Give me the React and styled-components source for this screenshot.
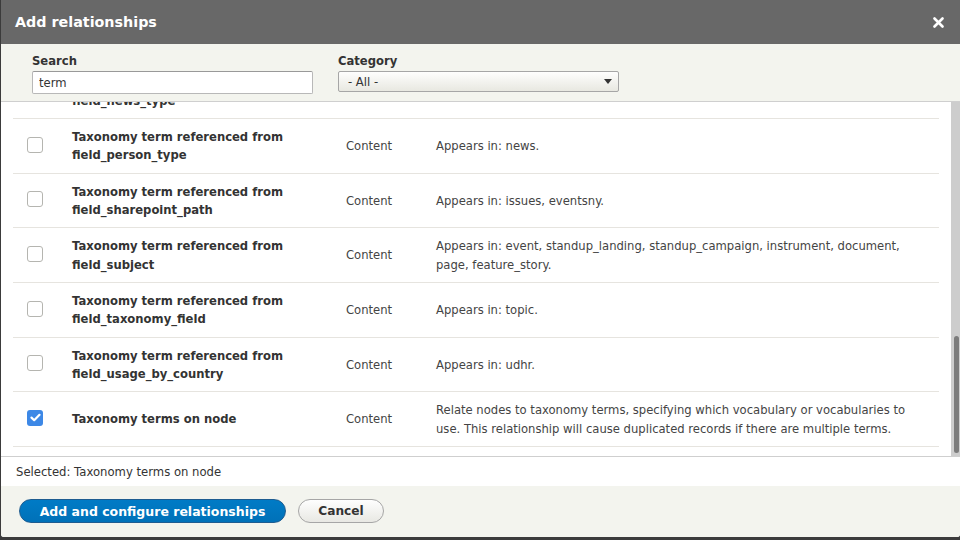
import React from "react";
import styled, { createGlobalStyle } from "styled-components";

const GlobalStyle = createGlobalStyle`
  html, body { margin: 0; padding: 0; background: #3b3b3b; }
  body { font-family: "DejaVu Sans", "Noto Sans", sans-serif; color: #333; }
  * { box-sizing: border-box; }
`;

const Page = styled.div`
  width: 960px;
  height: 540px;
  overflow: hidden;
  padding-left: 1px;
`;

const Dialog = styled.div`
  width: 959px;
  height: 537px;
  display: flex;
  flex-direction: column;
  background: #fff;
  border-radius: 0 0 3px 3px;
  overflow: hidden;
`;

const TitleBar = styled.div`
  height: 44px;
  flex: none;
  background: #686868;
  display: flex;
  align-items: center;
  justify-content: space-between;
  padding: 0 16px 0 14px;
`;

const Title = styled.h1`
  margin: 0;
  font-size: 14.3px;
  font-weight: bold;
  color: #fff;
  line-height: 20px;
`;

const CloseButton = styled.button`
  border: 0;
  background: none;
  padding: 0;
  width: 11px;
  height: 11px;
  display: flex;
  cursor: pointer;
`;

const Filters = styled.div`
  height: 57px;
  flex: none;
  background: #f3f4ee;
  display: flex;
  gap: 25px;
  padding: 9px 0 0 31px;
`;

const Field = styled.div`
  display: flex;
  flex-direction: column;
  width: 281px;
`;

const Label = styled.label`
  font-size: 11.6px;
  font-weight: bold;
  color: #333;
  line-height: 16px;
  margin-bottom: 2px;
`;

const TextInput = styled.input`
  width: 281px;
  height: 23px;
  border: 1px solid #b8b8b8;
  border-top-color: #999;
  border-radius: 2px;
  background: #fff;
  font-family: inherit;
  font-size: 11.6px;
  color: #333;
  padding: 0 6px;
  outline: none;
`;

const SelectBox = styled.div`
  width: 281px;
  height: 21px;
  border: 1px solid #a6a6a6;
  border-radius: 2px;
  background: linear-gradient(#fefefd, #e8e8e1);
  display: flex;
  align-items: center;
  justify-content: space-between;
  padding: 0 6px 0 9px;
  font-size: 11.6px;
  color: #333;
`;

const Arrow = styled.span`
  width: 0;
  height: 0;
  border-left: 4px solid transparent;
  border-right: 4px solid transparent;
  border-top: 5px solid #333;
`;

const ScrollArea = styled.div`
  height: 356px;
  flex: none;
  display: flex;
  border-top: 1px solid #cfcfcf;
  border-bottom: 1px solid #cfcfcf;
`;

const Viewport = styled.div`
  flex: 1;
  overflow: hidden;
  display: flex;
  flex-direction: column;
  justify-content: flex-end;
  padding: 0 12px 9px 12px;
`;

const Track = styled.div`
  width: 9px;
  flex: none;
  background: #cdcdcd;
  display: flex;
  flex-direction: column;
  justify-content: flex-end;
  padding: 0 1px 3px 3px;
`;

const Thumb = styled.div`
  height: 117px;
  border-radius: 3px;
  background: #7c7c7c;
`;

const Table = styled.table`
  width: 926px;
  flex: none;
  border-collapse: collapse;
  table-layout: fixed;
  font-size: 11.6px;
  line-height: 18.35px;
`;

const Row = styled.tr`
  border-bottom: 1px solid #e6e4df;
`;

const Cell = styled.td`
  padding: 9px 12px 8px;
  vertical-align: middle;
  color: ${(p) => (p.$strong ? "#333" : "#444")};
  font-weight: ${(p) => (p.$strong ? "bold" : "normal")};
  padding-left: ${(p) => (p.$first ? "14px" : "12px")};
`;

const Box = styled.span`
  display: inline-flex;
  align-items: center;
  justify-content: center;
  width: 16px;
  height: 16px;
  border-radius: 3px;
  vertical-align: middle;
  margin-top: -4px;
  border: ${(p) => (p.$checked ? "none" : "1px solid #b5b5b0")};
  background: ${(p) => (p.$checked ? "#3d88e6" : "#fff")};
`;

const SelectedBar = styled.div`
  height: 29px;
  flex: none;
  display: flex;
  align-items: center;
  padding: 0 15px;
  font-size: 11.65px;
  color: #333;
`;

const ButtonPane = styled.div`
  flex: 1;
  background: #f3f4ee;
  display: flex;
  align-items: flex-start;
  gap: 12px;
  padding: 13px 18px;
`;

const Button = styled.button`
  height: 24px;
  border-radius: 12px;
  padding: 0 10px;
  font-family: inherit;
  font-size: ${(p) => (p.$primary ? "12.5px" : "12.2px")};
  font-weight: bold;
  white-space: nowrap;
  cursor: pointer;
  border: 1px solid ${(p) => (p.$primary ? "#1e5c90" : "#a6a6a6")};
  color: ${(p) => (p.$primary ? "#fff" : "#333")};
  background: ${(p) =>
    p.$primary
      ? "linear-gradient(#007bc6, #0071b8)"
      : "linear-gradient(#fefefe, #e8e8e3)"};
  width: ${(p) => p.$width};
`;

const rows = [
  { title: "Taxonomy term referenced from field_location", desc: "Appears in: event." },
  { title: "Taxonomy term referenced from field_news_type", desc: "Appears in: news." },
  { title: "Taxonomy term referenced from field_person_type", desc: "Appears in: news." },
  { title: "Taxonomy term referenced from field_sharepoint_path", desc: "Appears in: issues, eventsny." },
  {
    title: "Taxonomy term referenced from field_subject",
    desc: "Appears in: event, standup_landing, standup_campaign, instrument, document, page, feature_story.",
  },
  { title: "Taxonomy term referenced from field_taxonomy_field", desc: "Appears in: topic." },
  { title: "Taxonomy term referenced from field_usage_by_country", desc: "Appears in: udhr." },
  {
    title: "Taxonomy terms on node",
    desc: "Relate nodes to taxonomy terms, specifying which vocabulary or vocabularies to use. This relationship will cause duplicated records if there are multiple terms.",
    checked: true,
  },
];

function Checkbox({ checked }) {
  return (
    <Box $checked={checked}>
      {checked && (
        <svg width="11" height="9" viewBox="0 0 11 9">
          <path d="M1.5 4.6 L4.2 7.2 L9.5 1.8" fill="none" stroke="#fff" strokeWidth="2.2" strokeLinecap="round" strokeLinejoin="round" />
        </svg>
      )}
    </Box>
  );
}

export default function App() {
  return (
    <Page>
      <GlobalStyle />
      <Dialog>
        <TitleBar>
          <Title>Add relationships</Title>
          <CloseButton aria-label="Close">
            <svg width="11" height="11" viewBox="0 0 11 11">
              <path d="M1.5 1.5 L9.5 9.5 M9.5 1.5 L1.5 9.5" stroke="#fff" strokeWidth="2.6" strokeLinecap="round" />
            </svg>
          </CloseButton>
        </TitleBar>
        <Filters>
          <Field>
            <Label>Search</Label>
            <TextInput defaultValue="term" />
          </Field>
          <Field>
            <Label>Category</Label>
            <SelectBox>
              <span>- All -</span>
              <Arrow />
            </SelectBox>
          </Field>
        </Filters>
        <ScrollArea>
          <Viewport>
            <Table>
              <colgroup>
                <col style={{ width: 47 }} />
                <col style={{ width: 274 }} />
                <col style={{ width: 90 }} />
                <col />
              </colgroup>
              <tbody>
                {rows.map((r) => (
                  <Row key={r.title}>
                    <Cell $first>
                      <Checkbox checked={r.checked} />
                    </Cell>
                    <Cell $strong>{r.title}</Cell>
                    <Cell>Content</Cell>
                    <Cell>{r.desc}</Cell>
                  </Row>
                ))}
              </tbody>
            </Table>
          </Viewport>
          <Track>
            <Thumb />
          </Track>
        </ScrollArea>
        <SelectedBar>Selected: Taxonomy terms on node</SelectedBar>
        <ButtonPane>
          <Button $primary $width="267px">Add and configure relationships</Button>
          <Button $width="86px">Cancel</Button>
        </ButtonPane>
      </Dialog>
    </Page>
  );
}
